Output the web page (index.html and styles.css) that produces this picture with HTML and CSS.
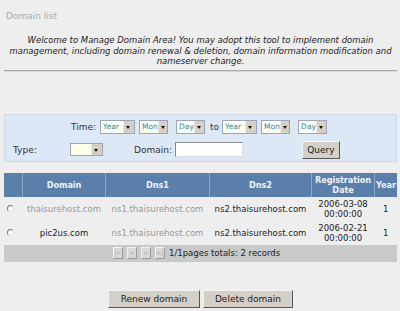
FILE: index.html
```html
<!DOCTYPE html>
<html>
<head>
  <link rel="stylesheet" href="styles.css">
</head>
<body>
  <div class="page">
    <div class="title">Domain list</div>
    <p class="intro">Welcome to Manage Domain Area! You may adopt this tool to implement domain management, including domain renewal &amp; deletion, domain information modification and nameserver change.</p>
    <div class="rule"></div>

    <div class="search">
      <div class="search-row time-row">
        <span class="label">Time:</span>
        <span class="sel sel-year"><span class="sel-val">Year</span><span class="sel-btn"></span></span>
        <span class="sel sel-mon"><span class="sel-val">Mon</span><span class="sel-btn"></span></span>
        <span class="sel sel-day"><span class="sel-val">Day</span><span class="sel-btn"></span></span>
        <span class="label to-label">to</span>
        <span class="sel sel-year"><span class="sel-val">Year</span><span class="sel-btn"></span></span>
        <span class="sel sel-mon"><span class="sel-val">Mon</span><span class="sel-btn"></span></span>
        <span class="sel sel-day"><span class="sel-val">Day</span><span class="sel-btn"></span></span>
      </div>
      <div class="search-row type-row">
        <span class="label type-label">Type:</span>
        <span class="sel sel-type"><span class="sel-val"></span><span class="sel-btn"></span></span>
        <span class="label domain-label">Domain:</span>
        <input class="text-input" type="text">
        <button class="btn query-btn">Query</button>
      </div>
    </div>

    <table class="list">
      <thead>
        <tr>
          <th class="col-radio"></th>
          <th class="col-domain">Domain</th>
          <th class="col-dns1">Dns1</th>
          <th class="col-dns2">Dns2</th>
          <th class="col-date">Registration Date</th>
          <th class="col-year">Year</th>
        </tr>
      </thead>
      <tbody>
        <tr>
          <td class="cell-radio"><span class="radio"></span></td>
          <td class="muted">thaisurehost.com</td>
          <td class="muted">ns1.thaisurehost.com</td>
          <td>ns2.thaisurehost.com</td>
          <td>2006-03-08<br>00:00:00</td>
          <td>1</td>
        </tr>
        <tr>
          <td class="cell-radio"><span class="radio"></span></td>
          <td>pic2us.com</td>
          <td class="muted">ns1.thaisurehost.com</td>
          <td>ns2.thaisurehost.com</td>
          <td>2006-02-21<br>00:00:00</td>
          <td>1</td>
        </tr>
      </tbody>
      <tfoot>
        <tr>
          <td colspan="6" class="pager">
            <span class="pg-btn">|&lt;</span><span class="pg-btn">&lt;</span><span class="pg-btn">&gt;</span><span class="pg-btn">&gt;|</span><span class="pg-text">1/1pages totals: 2 records</span>
          </td>
        </tr>
      </tfoot>
    </table>

    <div class="actions">
      <button class="btn renew-btn">Renew domain</button>
      <button class="btn delete-btn">Delete domain</button>
    </div>
  </div>
</body>
</html>
```

FILE: styles.css
```css
body {
  margin: 0;
  background: #eeeeee;
  font-family: "DejaVu Sans", Verdana, sans-serif;
  font-size: 8.5px;
  color: #222;
}

.page {
  padding: 0 3px 0 4px;
}

.title {
  color: #aaaaaa;
  font-size: 9px;
  padding: 11px 0 0 2px;
  height: 17px;
}

.intro {
  margin: 7px 0 0 0;
  font-style: italic;
  text-align: center;
  line-height: 10.5px;
  color: #222;
}

.rule {
  margin-top: 3px;
  border-top: 1px solid #a9a9a9;
  border-bottom: 1px solid #d8d8d8;
}

/* search panel */
.search {
  margin-top: 42px;
  background: #dde8f7;
  border: 1px solid #cdd8e8;
  height: 46px;
}

.search-row {
  display: flex;
  align-items: center;
}

.time-row {
  padding: 5px 0 0 66px;
}

.label {
  color: #333;
  font-size: 9px;
}

.time-row .label {
  margin-right: 4px;
}

.time-row .to-label {
  margin-right: 3px;
}

.sel {
  display: inline-flex;
  height: 14px;
  border: 1px solid #9aa6b5;
  background: #fbfdf0;
  box-sizing: border-box;
}

.sel-year {
  width: 35px;
  margin-right: 4px;
}

.sel-mon {
  width: 29px;
  margin-right: 8px;
}

.sel-day {
  width: 29px;
  margin-right: 5px;
}

.sel-val {
  flex: 1;
  font-size: 7.5px;
  line-height: 12px;
  color: #3a86a6;
  padding-left: 2px;
}

.sel-btn {
  width: 10px;
  background: #d4d0c8;
  border-left: 1px solid #eee;
  position: relative;
}

.sel-btn::after {
  content: '';
  position: absolute;
  left: 2px;
  top: 5px;
  border: 2.5px solid transparent;
  border-top: 3px solid #111;
  border-bottom: 0;
}

.type-row {
  padding: 7px 0 0 8px;
}

.type-label {
  width: 57px;
}

.sel-type {
  width: 33px;
  height: 13px;
  background: #fbffe8;
}

.domain-label {
  margin-left: 31px;
  margin-right: 3px;
}

.text-input {
  width: 68px;
  height: 15px;
  box-sizing: border-box;
  border: 1px solid #8a8a8a;
  border-right-color: #ddd;
  border-bottom-color: #ddd;
  background: #fff;
  padding: 0;
}

.btn {
  font-family: "DejaVu Sans", Verdana, sans-serif;
  font-size: 9px;
  color: #222;
  background: #d4d0c8;
  border: 1px solid;
  border-color: #f4f4f4 #555 #555 #f4f4f4;
  padding: 0;
  cursor: pointer;
}

.query-btn {
  margin-left: 59px;
  width: 38px;
  height: 18px;
}

/* table */
.list {
  width: 100%;
  margin-top: 11px;
  border-collapse: collapse;
}

.list th {
  background: #5a7fab;
  color: #eef2f8;
  font-weight: bold;
  font-size: 8.2px;
  letter-spacing: -0.1px;
  height: 24px;
  padding: 0;
  line-height: 10px;
  border-left: 1px solid #8ea6c4;
}

.list th:first-child {
  border-left: 0;
}

.col-radio { width: 18px; }
.col-domain { width: 82px; }
.col-dns1 { width: 103px; }
.col-dns2 { width: 101px; }
.col-date { width: 62px; }

.list td {
  text-align: center;
  height: 24px;
  padding: 0;
  line-height: 10px;
  white-space: nowrap;
  font-size: 8.5px;
}

.list td.muted {
  color: #999;
}

.list td.cell-radio {
  text-align: left;
  padding-left: 3px;
}

.radio {
  display: inline-block;
  width: 5px;
  height: 5px;
  border-radius: 50%;
  border: 1px solid #777;
  border-right-color: #ddd;
  border-bottom-color: #ddd;
  background: #fff;
}

.list td.pager {
  background: #c9c9c9;
  height: 17px;
  text-align: left;
  padding-left: 109px;
}

.pg-btn {
  display: inline-block;
  width: 10px;
  height: 12px;
  margin-right: 4px;
  background: #d8d8d8;
  border: 1px solid;
  border-color: #f2f2f2 #999 #999 #f2f2f2;
  box-sizing: border-box;
  color: #aaa;
  font-size: 6px;
  line-height: 10px;
  text-align: center;
  vertical-align: middle;
}

.pg-text {
  vertical-align: middle;
  color: #222;
}

.actions {
  display: flex;
  justify-content: center;
  gap: 3px;
  margin-top: 28px;
}

.renew-btn {
  width: 92px;
  height: 18px;
}

.delete-btn {
  width: 90px;
  height: 18px;
}
```
